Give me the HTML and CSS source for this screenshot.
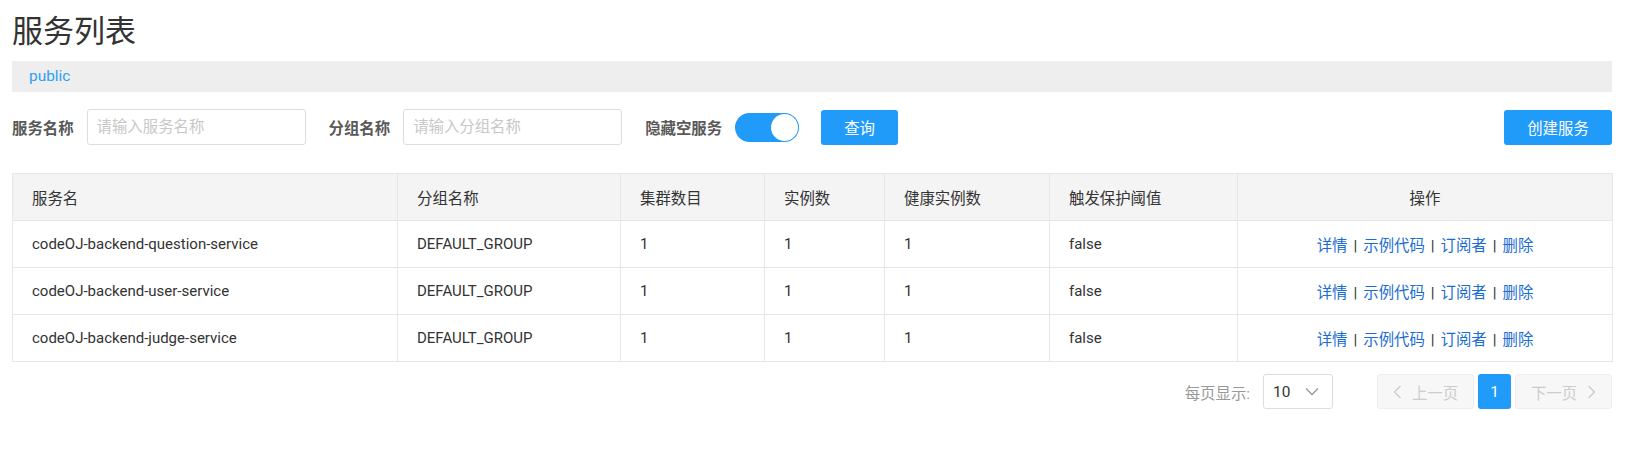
FILE: index.html
```html
<!DOCTYPE html>
<html lang="zh-CN">
<head>
<meta charset="utf-8">
<title>服务列表</title>
<link rel="stylesheet" href="styles.css">
</head>
<body>
<div class="page">
  <h1 class="title">服务列表</h1>
  <div class="ns-bar"><span class="ns">public</span></div>

  <div class="filters">
    <div class="field">
      <label class="label">服务名称</label>
      <input class="input" type="text" placeholder="请输入服务名称">
    </div>
    <div class="field">
      <label class="label">分组名称</label>
      <input class="input" type="text" placeholder="请输入分组名称">
    </div>
    <div class="field">
      <label class="label">隐藏空服务</label>
      <span class="switch"><span class="knob"></span></span>
    </div>
    <button class="btn btn-query">查询</button>
    <button class="btn btn-create">创建服务</button>
  </div>

  <table class="grid">
    <colgroup>
      <col class="c1"><col class="c2"><col class="c3"><col class="c4"><col class="c5"><col class="c6"><col class="c7">
    </colgroup>
    <thead>
      <tr>
        <th>服务名</th><th>分组名称</th><th>集群数目</th><th>实例数</th><th>健康实例数</th><th>触发保护阈值</th><th class="center">操作</th>
      </tr>
    </thead>
    <tbody>
      <tr>
        <td>codeOJ-backend-question-service</td><td>DEFAULT_GROUP</td><td>1</td><td>1</td><td>1</td><td>false</td>
        <td class="center"><a class="link">详情</a><span class="sep">|</span><a class="link">示例代码</a><span class="sep">|</span><a class="link">订阅者</a><span class="sep">|</span><a class="link">删除</a></td>
      </tr>
      <tr>
        <td>codeOJ-backend-user-service</td><td>DEFAULT_GROUP</td><td>1</td><td>1</td><td>1</td><td>false</td>
        <td class="center"><a class="link">详情</a><span class="sep">|</span><a class="link">示例代码</a><span class="sep">|</span><a class="link">订阅者</a><span class="sep">|</span><a class="link">删除</a></td>
      </tr>
      <tr>
        <td>codeOJ-backend-judge-service</td><td>DEFAULT_GROUP</td><td>1</td><td>1</td><td>1</td><td>false</td>
        <td class="center"><a class="link">详情</a><span class="sep">|</span><a class="link">示例代码</a><span class="sep">|</span><a class="link">订阅者</a><span class="sep">|</span><a class="link">删除</a></td>
      </tr>
    </tbody>
  </table>

  <div class="pager">
    <span class="pager-label">每页显示:</span>
    <div class="select">
      <span class="select-value">10</span>
      <svg class="select-arrow" width="14" height="9" viewBox="0 0 14 9"><path d="M1 1.5 L7 7.5 L13 1.5" fill="none" stroke="#999" stroke-width="1.3"/></svg>
    </div>
    <div class="pages">
      <button class="pbtn pbtn-nav">
        <svg width="9" height="14" viewBox="0 0 9 14"><path d="M7.5 1 L1.5 7 L7.5 13" fill="none" stroke="#ccc" stroke-width="1.4"/></svg>
        <span>上一页</span>
      </button>
      <button class="pbtn pbtn-cur">1</button>
      <button class="pbtn pbtn-nav">
        <span>下一页</span>
        <svg width="9" height="14" viewBox="0 0 9 14"><path d="M1.5 1 L7.5 7 L1.5 13" fill="none" stroke="#ccc" stroke-width="1.4"/></svg>
      </button>
    </div>
  </div>
</div>
</body>
</html>
```

FILE: styles.css
```css
* { box-sizing: border-box; }

body {
  margin: 0;
  background: #fff;
  font-family: Roboto, "Noto Sans CJK SC", sans-serif;
  font-size: 15.4px;
  color: #333;
}

.page {
  padding: 0 15px 0 12px;
}

.title {
  margin: 12px 0 9px;
  font-size: 31px;
  line-height: 40px;
  font-weight: 400;
  color: #333;
}

.ns-bar {
  height: 31px;
  line-height: 31px;
  background: #eee;
  padding-left: 17px;
}

.ns {
  color: #2f9ef4;
  font-size: 15.4px;
}

.filters {
  display: flex;
  align-items: center;
  margin-top: 17px;
  height: 36px;
}

.field {
  display: flex;
  align-items: center;
  margin-right: 23px;
}

.field:nth-child(3) {
  margin-right: 22px;
}

.label {
  font-weight: 700;
  color: #595959;
  margin-right: 13px;
  white-space: nowrap;
}

.input {
  width: 219px;
  height: 36px;
  border: 1px solid #ddd;
  border-radius: 3px;
  padding: 0 9px;
  font-family: inherit;
  font-size: 15.4px;
  color: #333;
  outline: none;
}

.input::placeholder {
  color: #c8c8c8;
}

.switch {
  position: relative;
  display: block;
  width: 64px;
  height: 29px;
  border-radius: 15px;
  background: #209bfa;
}

.knob {
  position: absolute;
  right: 1px;
  top: 1px;
  width: 27px;
  height: 27px;
  border-radius: 50%;
  background: #fff;
}

.btn {
  height: 35px;
  border: none;
  border-radius: 3px;
  background: #209bfa;
  color: #fff;
  font-family: inherit;
  font-size: 15.4px;
  padding: 0;
}

.btn-query {
  width: 77px;
}

.btn-create {
  width: 108px;
  margin-left: auto;
}

.grid {
  margin-top: 28px;
  width: 100%;
  table-layout: fixed;
  border-collapse: collapse;
  border: 1px solid #e6e6e6;
}

.c1 { width: 385px; }
.c2 { width: 223px; }
.c3 { width: 144px; }
.c4 { width: 120px; }
.c5 { width: 165px; }
.c6 { width: 188px; }
.c7 { width: 375px; }

.grid th,
.grid td {
  height: 47px;
  padding: 0 0 0 19px;
  text-align: left;
  font-weight: 400;
  color: #333;
  border: 1px solid #e6e6e6;
  white-space: nowrap;
}

.grid td {
  font-size: 15px;
}

.grid th {
  background: #f4f4f4;
}

.grid .center {
  text-align: center;
  padding: 0;
}

.grid td.center {
  font-size: 15.4px;
}

.link {
  color: #1a6dd2;
  cursor: pointer;
}

.sep {
  color: #333;
  margin: 0 6px;
}

.pager {
  display: flex;
  align-items: center;
  justify-content: flex-end;
  margin-top: 12px;
}

.pager-label {
  color: #999;
  margin-right: 13px;
}

.select {
  display: flex;
  align-items: center;
  justify-content: space-between;
  width: 70px;
  height: 35px;
  border: 1px solid #ddd;
  border-radius: 3px;
  padding: 0 13px 0 9px;
}

.select-value {
  color: #333;
}

.pages {
  display: flex;
  gap: 4px;
  margin-left: 44px;
}

.pbtn {
  height: 35px;
  border-radius: 3px;
  font-family: inherit;
  font-size: 15.4px;
  display: flex;
  align-items: center;
  justify-content: center;
  gap: 10px;
  padding: 0;
}

.pbtn-nav {
  width: 97px;
  background: #f7f7f7;
  border: 1px solid #eee;
  color: #ccc;
}

.pbtn-cur {
  width: 33px;
  background: #209bfa;
  border: none;
  color: #fff;
}
```
